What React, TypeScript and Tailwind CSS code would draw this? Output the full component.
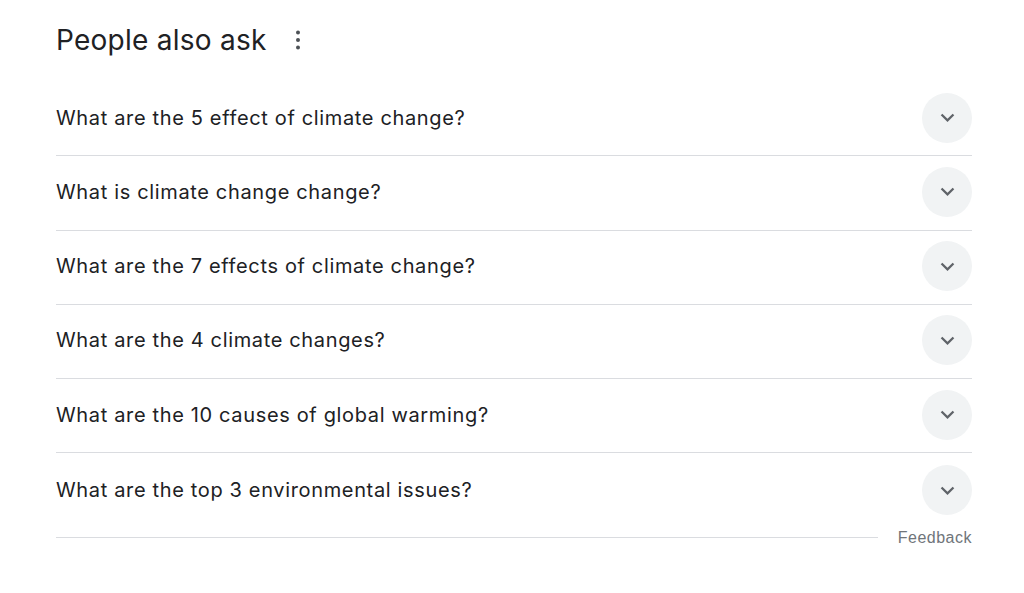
const questions = [
  "What are the 5 effect of climate change?",
  "What is climate change change?",
  "What are the 7 effects of climate change?",
  "What are the 4 climate changes?",
  "What are the 10 causes of global warming?",
  "What are the top 3 environmental issues?",
];

function Chevron() {
  return (
    <svg width="27" height="27" viewBox="0 0 24 24" fill="#5f6368">
      <path d="M16.59 8.59 12 13.17 7.41 8.59 6 10l6 6 6-6z" />
    </svg>
  );
}

export default function App() {
  return (
    <div className="w-[1024px] h-[593px] bg-white overflow-hidden font-['Inter',sans-serif] text-[#202124]">
      <div className="ml-[56px] w-[916px]">
        <div className="h-[82px] flex items-center pb-[3px]">
          <h2 className="text-[28px] leading-none tracking-[0.25px]">People also ask</h2>
          <svg className="ml-[19px]" width="24" height="24" viewBox="0 0 24 24" fill="#4d5156">
            <circle cx="12" cy="4.5" r="2" />
            <circle cx="12" cy="12" r="2" />
            <circle cx="12" cy="19.5" r="2" />
          </svg>
        </div>
        {questions.map((q, i) => (
          <div
            key={q}
            className={
              i < questions.length - 1
                ? "h-[74.25px] flex items-center justify-between border-b border-[#dadce0] pb-[2px]"
                : "h-[74.25px] flex items-center justify-between"
            }
          >
            <span className="text-[20px] leading-none tracking-[0.65px]">{q}</span>
            <div className="w-[50px] h-[50px] rounded-full bg-[#f1f3f4] flex items-center justify-center">
              <Chevron />
            </div>
          </div>
        ))}
        <div className="flex items-center h-[20px]">
          <div className="flex-1 border-t border-[#dadce0]" />
          <span className="ml-[20px] text-[16px] tracking-[0.5px] text-[#70757a] font-['Liberation_Sans',sans-serif]">Feedback</span>
        </div>
      </div>
    </div>
  );
}
